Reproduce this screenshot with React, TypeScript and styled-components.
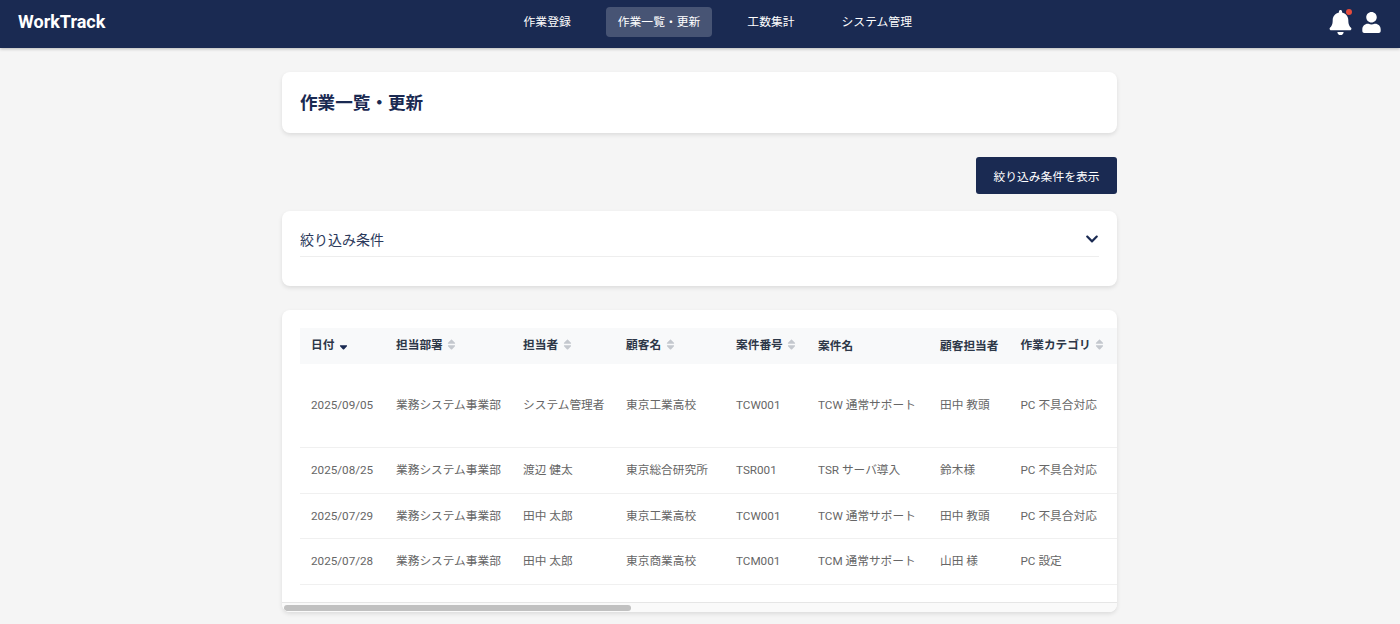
import styled, { createGlobalStyle } from 'styled-components';
import { FaBell, FaChevronDown, FaSort, FaSortDown, FaUser } from 'react-icons/fa';

const GlobalStyle = createGlobalStyle`
  * {
    box-sizing: border-box;
  }
  body {
    margin: 0;
    background: #f5f5f5;
    color: #333;
    font-family: Roboto, 'Noto Sans CJK JP', sans-serif;
  }
`;

const Header = styled.header`
  display: flex;
  align-items: center;
  justify-content: space-between;
  height: 48px;
  padding: 0 18px 4px 18px;
  background: #1a2a52;
  box-shadow: 0 1px 3px rgba(0, 0, 0, 0.25);
`;

const Logo = styled.div`
  color: #fff;
  font-size: 18px;
  font-weight: 700;
  width: 90px;
  margin-bottom: 1px;
  white-space: nowrap;
`;

const Nav = styled.nav`
  display: flex;
  gap: 23px;
`;

const NavItem = styled.a<{ $active?: boolean }>`
  display: block;
  height: 30px;
  padding: 0 12px;
  border-radius: 4px;
  background: ${(props) => (props.$active ? 'rgba(255, 255, 255, 0.2)' : 'transparent')};
  color: #fff;
  font-size: 11.8px;
  font-weight: 400;
  line-height: 30px;
  white-space: nowrap;
`;

const HeaderIcons = styled.div`
  display: flex;
  align-items: center;
  gap: 8.5px;
  color: #fff;
`;

const BellWrap = styled.div`
  position: relative;
  display: flex;
  font-size: 25px;
`;

const Badge = styled.span`
  position: absolute;
  top: -1px;
  right: 1px;
  width: 6px;
  height: 6px;
  border-radius: 50%;
  background: #e74c3c;
`;

const UserWrap = styled.div`
  display: flex;
  font-size: 21px;
`;

const Main = styled.main`
  display: flex;
  flex-direction: column;
  width: 835px;
  margin: 0 0 0 282px;
  padding: 24px 0 12px;
`;

const Card = styled.section`
  background: #fff;
  border-radius: 8px;
  box-shadow: 0 2px 4px rgba(0, 0, 0, 0.1);
`;

const TitleCard = styled(Card)`
  height: 61px;
  padding: 0 18px 2px;
  display: flex;
  align-items: center;
`;

const PageTitle = styled.h1`
  margin: 0;
  color: #1a2a52;
  font-size: 17.6px;
  font-weight: 700;
`;

const Actions = styled.div`
  display: flex;
  justify-content: flex-end;
  margin: 24px 0 17px;
`;

const FilterButton = styled.button`
  width: 141px;
  height: 37px;
  padding: 0;
  border: none;
  border-radius: 3px;
  background: #1a2a52;
  color: #fff;
  font-family: inherit;
  font-size: 11.8px;
  font-weight: 400;
`;

const FilterCard = styled(Card)`
  height: 75px;
  padding: 18px 18px 0;
`;

const FilterHead = styled.div`
  display: flex;
  align-items: center;
  justify-content: space-between;
  height: 28px;
  border-bottom: 1px solid #eee;
  color: #2c3a5c;
  font-size: 14px;
  font-weight: 400;
  padding-bottom: 7px;
  svg {
    font-size: 14px;
    color: #1a2a52;
  }
`;

const TableCard = styled(Card)`
  display: flex;
  flex-direction: column;
  margin-top: 24px;
  height: 302px;
  overflow: hidden;
`;

const ScrollArea = styled.div`
  flex: 1;
  padding: 18px 18px 0;
  overflow: hidden;
`;

const ScrollTrack = styled.div`
  display: flex;
  align-items: center;
  height: 10px;
  padding: 0 2px;
  background: #fafafa;
  border-top: 1px solid #e6e6e6;
`;

const ScrollThumb = styled.div<{ $width: number }>`
  width: ${(props) => props.$width}px;
  height: 6px;
  border-radius: 3px;
  background: #c1c1c1;
`;

const Table = styled.table`
  width: 1968px;
  table-layout: fixed;
  border-collapse: collapse;
  font-size: 11.7px;
`;

const Th = styled.th`
  height: 36px;
  padding: 0 11px 3px;
  background: #f8f9fa;
  color: #2d3748;
  font-weight: 700;
  text-align: left;
  white-space: nowrap;
`;

const SortIcon = styled.span<{ $on?: boolean }>`
  display: inline-block;
  margin-left: 2.5px;
  color: ${(props) => (props.$on ? '#1a2a52' : '#c4c8ce')};
  font-size: 13px;
  vertical-align: -2px;
`;

const Row = styled.tr<{ $height: number }>`
  height: ${(props) => props.$height}px;
  border-bottom: 1px solid #f0f0f0;
`;

const Td = styled.td`
  padding: 0 11px;
  color: #666;
  line-height: 18px;
  white-space: nowrap;
`;

const columns = [
  { label: '日付', width: 85, sort: 'active' },
  { label: '担当部署', width: 127, sort: 'idle' },
  { label: '担当者', width: 103, sort: 'idle' },
  { label: '顧客名', width: 110, sort: 'idle' },
  { label: '案件番号', width: 82, sort: 'idle' },
  { label: '案件名', width: 122, sort: 'none' },
  { label: '顧客担当者', width: 80.5, sort: 'none' },
  { label: '作業カテゴリ', width: 128, sort: 'idle' },
  // the rest of the table is scrolled out of view
  { label: '', width: 1130.5, sort: 'none' },
];

const rows = [
  { height: 83, cells: ['2025/09/05', '業務システム事業部', 'システム管理者', '東京工業高校', 'TCW001', 'TCW 通常サポート', '田中 教頭', 'PC 不具合対応'] },
  { height: 46, cells: ['2025/08/25', '業務システム事業部', '渡辺 健太', '東京総合研究所', 'TSR001', 'TSR サーバ導入', '鈴木様', 'PC 不具合対応'] },
  { height: 45, cells: ['2025/07/29', '業務システム事業部', '田中 太郎', '東京工業高校', 'TCW001', 'TCW 通常サポート', '田中 教頭', 'PC 不具合対応'] },
  { height: 46, cells: ['2025/07/28', '業務システム事業部', '田中 太郎', '東京商業高校', 'TCM001', 'TCM 通常サポート', '山田 様', 'PC 設定'] },
];

export default function App() {
  return (
    <>
      <GlobalStyle />
      <Header>
        <Logo>WorkTrack</Logo>
        <Nav>
          <NavItem>作業登録</NavItem>
          <NavItem $active>作業一覧・更新</NavItem>
          <NavItem>工数集計</NavItem>
          <NavItem>システム管理</NavItem>
        </Nav>
        <HeaderIcons>
          <BellWrap>
            <FaBell />
            <Badge />
          </BellWrap>
          <UserWrap>
            <FaUser />
          </UserWrap>
        </HeaderIcons>
      </Header>
      <Main>
        <TitleCard>
          <PageTitle>作業一覧・更新</PageTitle>
        </TitleCard>
        <Actions>
          <FilterButton>絞り込み条件を表示</FilterButton>
        </Actions>
        <FilterCard>
          <FilterHead>
            絞り込み条件
            <FaChevronDown />
          </FilterHead>
        </FilterCard>
        <TableCard>
          <ScrollArea>
            <Table>
              <colgroup>
                {columns.map((col) => (
                  <col key={col.label} width={col.width} />
                ))}
              </colgroup>
              <thead>
                <tr>
                  {columns.map((col) => (
                    <Th key={col.label}>
                      {col.label}
                      {col.sort !== 'none' && (
                        <SortIcon $on={col.sort === 'active'}>
                          {col.sort === 'active' ? <FaSortDown /> : <FaSort />}
                        </SortIcon>
                      )}
                    </Th>
                  ))}
                </tr>
              </thead>
              <tbody>
                {rows.map((row, i) => (
                  <Row key={i} $height={row.height}>
                    {columns.map((col, j) => (
                      <Td key={col.label}>{row.cells[j] ?? ''}</Td>
                    ))}
                  </Row>
                ))}
              </tbody>
            </Table>
          </ScrollArea>
          <ScrollTrack>
            <ScrollThumb $width={347} />
          </ScrollTrack>
        </TableCard>
      </Main>
    </>
  );
}
